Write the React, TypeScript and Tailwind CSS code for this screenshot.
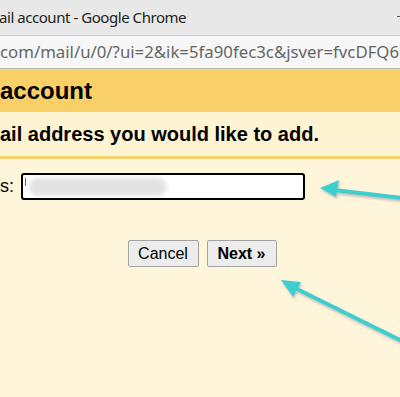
export default function App() {
  return (
    <div className="relative w-[400px] h-[397px] overflow-hidden bg-[#fef5da] font-['Liberation_Sans',Arial,sans-serif]">
      {/* window title */}
      <div className="h-[36px] bg-[#e8e8e8] border-b border-[#cdcdcd] flex items-center justify-between font-['Noto_Sans',sans-serif] text-[15px] text-[#222]">
        <span className="-ml-[1px] whitespace-nowrap tracking-[-0.45px]">ail account - Google Chrome</span>
        <div className="w-[3px] h-[1px] bg-[#555] mb-[2px]" />
      </div>
      {/* address bar */}
      <div className="h-[33px] bg-[#f7f7f7] border-b border-[#b9b9b9] flex items-center font-['Noto_Sans',sans-serif] text-[16.8px] text-[#666] whitespace-nowrap">
        <span>com/mail/u/0/?ui=2&amp;ik=5fa90fec3c&amp;jsver=fvcDFQ6r</span>
      </div>

      <div className="h-[43px] bg-[#f9d068] flex items-center">
        <h1 className="text-[24px] font-bold text-black">account</h1>
      </div>
      <div className="h-[44px] bg-[#fef4d2] flex items-center">
        <p className="text-[20px] font-bold text-black whitespace-nowrap">ail address you would like to add.</p>
      </div>
      <div className="h-[3px] bg-[#f7d070]" />

      <div className="pt-[14px]">
        <div className="flex items-center gap-[7px] text-[18px] text-black">
          <span>s:</span>
          <div className="relative w-[284px] h-[27px] bg-white border-2 border-black rounded-[3px] overflow-hidden">
            <div className="absolute left-[2px] top-[3px] w-[1px] h-[8px] bg-[#666]" />
            <div className="absolute left-[6px] top-[3px] w-[138px] h-[18px] rounded-full bg-[#e2e2e2] blur-[2px]" />
          </div>
        </div>

        <div className="mt-[40px] flex justify-center gap-[8px] pl-[4px] text-[16px] text-black">
          <button className="h-[27px] w-[71px] bg-[#ececec] border border-[#a3a3a3] rounded-[2px]">Cancel</button>
          <button className="h-[27px] w-[70px] bg-[#ececec] border border-[#a3a3a3] rounded-[2px] font-bold">Next »</button>
        </div>
      </div>

      {/* annotation arrows */}
      <svg className="absolute inset-0 pointer-events-none" width="400" height="397" viewBox="0 0 400 397">
        <defs>
          <filter id="sh" x="-20%" y="-20%" width="140%" height="140%">
            <feDropShadow dx="1" dy="2" stdDeviation="1.2" floodColor="#8a6f8f" floodOpacity="0.45" />
          </filter>
        </defs>
        <g filter="url(#sh)" fill="#3ccfcf" stroke="#3ccfcf" strokeLinecap="round">
          <line x1="402" y1="198" x2="334" y2="190" strokeWidth="4" />
          <polygon points="320,188 339,180 336,197" stroke="none" />
          <line x1="402" y1="341" x2="293" y2="287" strokeWidth="4" />
          <polygon points="281,280 301,282 293,297" stroke="none" />
        </g>
      </svg>
    </div>
  );
}
